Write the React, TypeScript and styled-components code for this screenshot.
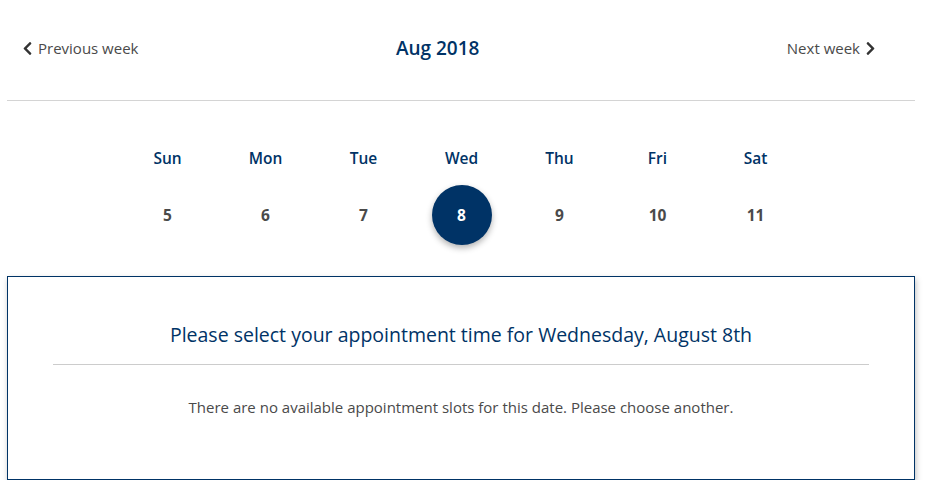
import React from "react"
import styled, { createGlobalStyle } from "styled-components"
import { FaChevronLeft, FaChevronRight } from "react-icons/fa"

const GlobalStyle = createGlobalStyle`
  body {
    margin: 0;
    background: #ffffff;
    font-family: "Open Sans", "Lato", sans-serif;
  }
`

const navy = "#003366"

const Page = styled.div`
  width: 908px;
  padding: 0 7px;
  box-sizing: content-box;
`

const WeekHeader = styled.div`
  display: flex;
  align-items: center;
  justify-content: space-between;
  height: 101px;
  padding: 0 39px 4px 15px;
  box-sizing: border-box;
  border-bottom: 1px solid #d4d4d4;
`

const NavLink = styled.a`
  display: flex;
  align-items: center;
  gap: 5px;
  font-size: 15px;
  color: #4a4a4a;
  cursor: pointer;

  svg {
    width: 11px;
    height: 15px;
    color: #333;
  }
`

const MonthTitle = styled.div`
  font-size: 19px;
  font-weight: 600;
  color: ${navy};
  margin-right: 50px;
`

const DaysGrid = styled.div`
  display: grid;
  grid-template-columns: repeat(7, 98px);
  justify-content: center;
  padding-top: 46px;
  margin-left: 1px;
`

const DayName = styled.div`
  text-align: center;
  font-size: 15.5px;
  font-weight: 600;
  color: ${navy};
  height: 22px;
  line-height: 22px;
`

const DateCell = styled.div`
  display: flex;
  justify-content: center;
  padding-top: 16px;
  height: 107px;
  box-sizing: border-box;
`

const DateCircle = styled.div<{ $selected?: boolean }>`
  width: 60px;
  height: 60px;
  border-radius: 50%;
  display: flex;
  align-items: center;
  justify-content: center;
  font-size: 15.5px;
  font-weight: 700;
  color: ${(p) => (p.$selected ? "#ffffff" : "#4a4a4a")};
  background: ${(p) => (p.$selected ? navy : "transparent")};
  box-shadow: ${(p) => (p.$selected ? "0 3px 6px rgba(0,0,0,0.3)" : "none")};
`

const SlotsBox = styled.div`
  border: 1px solid ${navy};
  box-shadow: 1px 3px 6px rgba(0, 0, 0, 0.25);
  height: 204px;
  box-sizing: border-box;
  padding: 0 45px;
  display: flex;
  flex-direction: column;
  align-items: stretch;
`

const SlotsTitle = styled.div`
  text-align: center;
  font-size: 19.5px;
  color: ${navy};
  padding: 44px 0 16px;
  border-bottom: 1px solid #cccccc;
`

const SlotsMessage = styled.div`
  text-align: center;
  font-size: 15px;
  color: #4a4a4a;
  padding-top: 32px;
`

const days = [
  { name: "Sun", date: 5 },
  { name: "Mon", date: 6 },
  { name: "Tue", date: 7 },
  { name: "Wed", date: 8 },
  { name: "Thu", date: 9 },
  { name: "Fri", date: 10 },
  { name: "Sat", date: 11 },
]

const App: React.FC = () => {
  return (
    <Page>
      <GlobalStyle />
      <WeekHeader>
        <NavLink>
          <FaChevronLeft />
          Previous week
        </NavLink>
        <MonthTitle>Aug 2018</MonthTitle>
        <NavLink>
          Next week
          <FaChevronRight />
        </NavLink>
      </WeekHeader>
      <DaysGrid>
        {days.map((d) => (
          <DayName key={d.name}>{d.name}</DayName>
        ))}
        {days.map((d) => (
          <DateCell key={d.date}>
            <DateCircle $selected={d.date === 8}>{d.date}</DateCircle>
          </DateCell>
        ))}
      </DaysGrid>
      <SlotsBox>
        <SlotsTitle>
          Please select your appointment time for Wednesday, August 8th
        </SlotsTitle>
        <SlotsMessage>
          There are no available appointment slots for this date. Please choose
          another.
        </SlotsMessage>
      </SlotsBox>
    </Page>
  )
}

export default App
